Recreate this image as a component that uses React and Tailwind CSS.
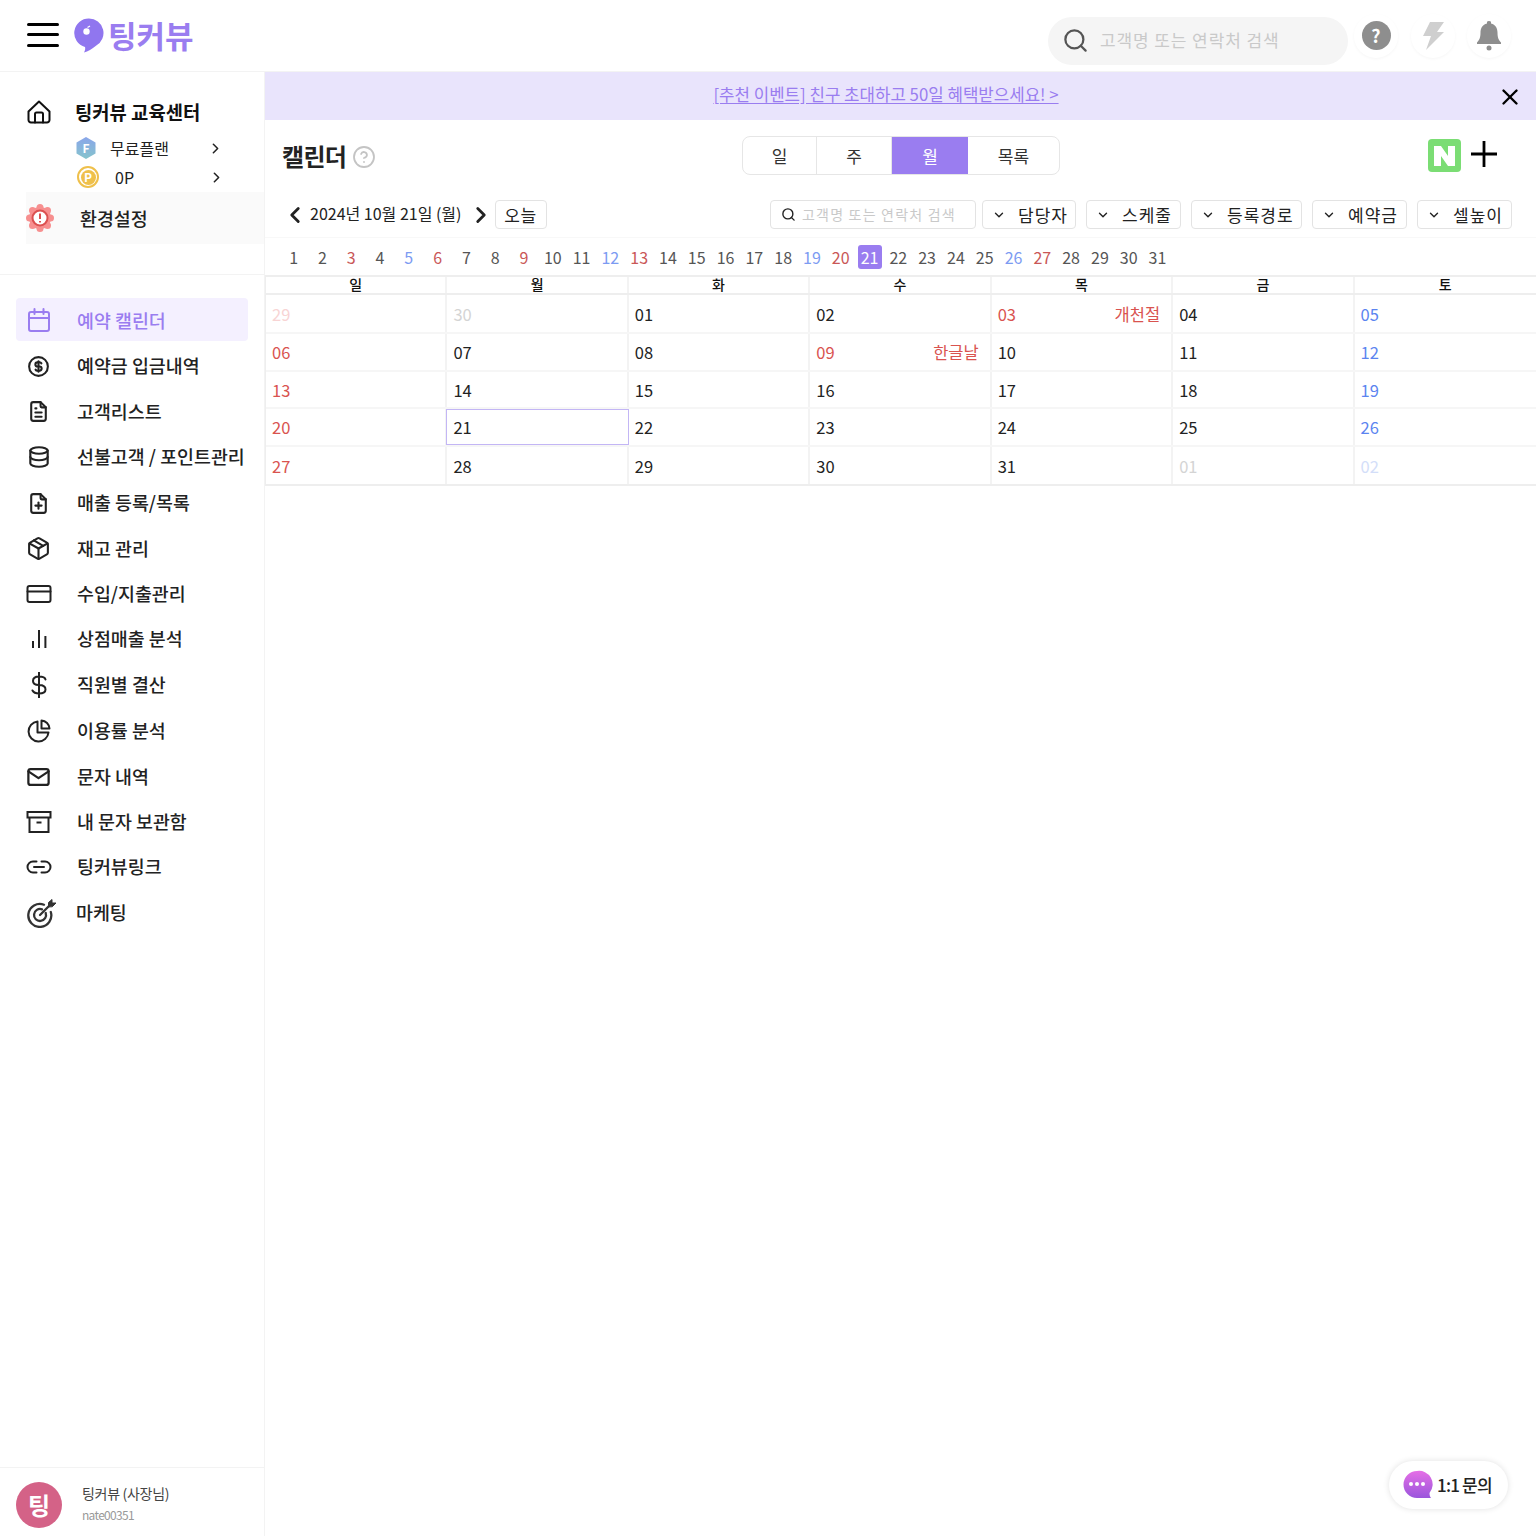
import { TbCoin, TbFileText, TbDatabase, TbFilePlus, TbMail } from "react-icons/tb";
import { ChevronLeft, ChevronRight, ChevronDown, Search, X, CircleHelp, Package } from "lucide-react";

const FONT = "font-['Noto_Sans_CJK_KR','Noto_Sans',sans-serif]";

function Line({ size = 26, children }) {
  return (
    <svg width={size} height={size} viewBox="0 0 26 26" fill="none" stroke="currentColor" strokeWidth="2" strokeLinecap="round" strokeLinejoin="round">
      {children}
    </svg>
  );
}

const HomeIcon = () => (
  <Line>
    <path d="M2.500 12.500 13 2.500l10.500 10v8.500a2.500 2.500 0 0 1-2.500 2.500H5A2.500 2.500 0 0 1 2.500 21z" />
    <path d="M9 23.500v-8.500a1.500 1.500 0 0 1 1.500-1.500h5A1.500 1.500 0 0 1 17 15v8.500" />
  </Line>
);
const CalendarIcon = () => (
  <Line>
    <rect x="3" y="5" width="20" height="19" rx="2" />
    <path d="M3 11h20M8.500 2v5M17.500 2v5" />
  </Line>
);
const CardIcon = () => (
  <Line>
    <rect x="1.500" y="5" width="23" height="16" rx="2" />
    <path d="M1.500 10.500h23" />
  </Line>
);
const BarsIcon = () => (
  <Line>
    <path d="M7 15v7M13 4v18M19.400 10v12" strokeLinecap="butt" />
  </Line>
);
const DollarIcon = () => (
  <Line>
    <path d="M19.500 7.500C19 5.500 16.500 4.500 13 4.500 9.500 4.500 7 6 7 9c0 3 3 4 6 4s6.500 1 6.500 4.500c0 3-2.500 4-6.500 4-3.500 0-5.500-1-6.500-3M13 .5v25" />
  </Line>
);
const PieIcon = () => (
  <Line>
    <path d="M11.500 3.500a10 10 0 1 0 11 11H11.500z" />
    <path d="M15.500 2.500a8.500 8.500 0 0 1 8 8h-8z" />
  </Line>
);
const ArchiveIcon = () => (
  <Line>
    <path d="M1.500 3h23v5.500h-23zM3.500 8.500V23h19V8.500M10.500 13.500h5" strokeLinecap="butt" strokeLinejoin="miter" />
  </Line>
);
const LinkIcon = () => (
  <Line>
    <path d="M10.500 7.500H7a5.500 5.500 0 0 0 0 11h3.500M15.500 7.500H19a5.500 5.500 0 0 1 0 11h-3.500M8 13h10" />
  </Line>
);
const TargetIcon = () => (
  <svg width="30" height="30" viewBox="0 0 30 30" fill="none" stroke="#333" strokeWidth="2.300" strokeLinecap="round" className="ml-[6px] shrink-0">
    <path d="M17 6.700A11.500 11.500 0 1 0 23.800 14" />
    <path d="M15 11.300A6 6 0 1 0 18.700 15" />
    <path d="M13 17 24 6" />
    <path d="M21.500 8.500V4.500L25 1.500V5h4l-3.500 3.500z" fill="#333" strokeWidth="1" strokeLinejoin="round" />
  </svg>
);

const menu = [
  { label: "예약금 입금내역", icon: <TbCoin size={25} />, h: "h-[46px]" },
  { label: "고객리스트", icon: <TbFileText size={25} />, h: "h-[45px]" },
  { label: "선불고객 / 포인트관리", icon: <TbDatabase size={26} />, h: "h-[46px]" },
  { label: "매출 등록/목록", icon: <TbFilePlus size={25} />, h: "h-[46px]" },
  { label: "재고 관리", icon: <Package size={25} strokeWidth={2} />, h: "h-[45px]" },
  { label: "수입/지출관리", icon: <CardIcon />, h: "h-[45px]" },
  { label: "상점매출 분석", icon: <BarsIcon />, h: "h-[46px]" },
  { label: "직원별 결산", icon: <DollarIcon />, h: "h-[46px]" },
  { label: "이용률 분석", icon: <PieIcon />, h: "h-[46px]" },
  { label: "문자 내역", icon: <TbMail size={28} />, h: "h-[45px]" },
  { label: "내 문자 보관함", icon: <ArchiveIcon />, h: "h-[45px]" },
  { label: "팅커뷰링크", icon: <LinkIcon />, h: "h-[46px]" },
  { label: "마케팅", icon: <TargetIcon />, h: "h-[46px]", tight: true },
];

const RED = [3, 6, 9, 13, 20, 27];
const BLUE = [5, 12, 19, 26];

const weeks = [
  [
    { d: "29", c: "text-[#f8d4d4]" },
    { d: "30", c: "text-[#d4d4d4]" },
    { d: "01" },
    { d: "02" },
    { d: "03", c: "text-[#d9534f]", note: "개천절" },
    { d: "04" },
    { d: "05", c: "text-[#5b84f0]" },
  ],
  [
    { d: "06", c: "text-[#d9534f]" },
    { d: "07" },
    { d: "08" },
    { d: "09", c: "text-[#d9534f]", note: "한글날" },
    { d: "10" },
    { d: "11" },
    { d: "12", c: "text-[#5b84f0]" },
  ],
  [
    { d: "13", c: "text-[#d9534f]" },
    { d: "14" },
    { d: "15" },
    { d: "16" },
    { d: "17" },
    { d: "18" },
    { d: "19", c: "text-[#5b84f0]" },
  ],
  [
    { d: "20", c: "text-[#d9534f]" },
    { d: "21", today: true },
    { d: "22" },
    { d: "23" },
    { d: "24" },
    { d: "25" },
    { d: "26", c: "text-[#5b84f0]" },
  ],
  [
    { d: "27", c: "text-[#d9534f]" },
    { d: "28" },
    { d: "29" },
    { d: "30" },
    { d: "31" },
    { d: "01", c: "text-[#d4d4d4]" },
    { d: "02", c: "text-[#d3def9]" },
  ],
];

const rowHeights = ["h-[37px]", "h-[38px]", "h-[37px]", "h-[38px]", "h-[39px]"];
const rowPad = ["pt-[2px]", "", "pt-[2px]", "", "pt-[2px]"];

function FilterButton({ label, width }) {
  return (
    <button className={`${width} flex h-[29px] items-center gap-[12px] rounded border border-[#e3e3e3] bg-white pl-[9px] text-[17px] tracking-[1px] text-[#222]`}>
      <ChevronDown size={14} strokeWidth={2.4} />
      {label}
    </button>
  );
}

function Sidebar() {
  return (
    <aside className="flex w-[265px] shrink-0 flex-col justify-between border-r border-[#f3f3f3]">
      <div>
        <div className="border-b border-[#f3f3f3] pb-[30px] pt-[25px]">
          <div className="flex h-[30px] items-center pl-[26px]">
            <span className="text-[#111]">
              <HomeIcon />
            </span>
            <span className="ml-[23px] text-[18.800px] font-bold text-[#111]">팅커뷰 교육센터</span>
          </div>
          <div className="mt-[8px] flex h-[26px] items-center pl-[75px] text-[16px] text-[#222]">
            <svg width="22" height="24" viewBox="0 0 22 24">
              <defs>
                <linearGradient id="plan" x1="0" y1="0" x2="0" y2="1">
                  <stop offset="0" stopColor="#8aa6ea" />
                  <stop offset="1" stopColor="#85c4cc" />
                </linearGradient>
              </defs>
              <path d="M11 1l9.500 5.500v11L11 23l-9.500-5.500v-11z" fill="url(#plan)" />
              <text x="11" y="16.500" textAnchor="middle" fontSize="12" fontWeight="700" fill="#fff">F</text>
            </svg>
            <span className="ml-[13px] w-[97px]">무료플랜</span>
            <ChevronRight size={17} strokeWidth={2.2} />
          </div>
          <div className="mt-[3px] flex h-[26px] items-center pl-[77px] text-[16px] text-[#222]">
            <span className="flex h-[22px] w-[22px] items-center justify-center rounded-full border-2 border-[#efc04b] font-bold text-white">
              <span className="flex h-[15px] w-[15px] items-center justify-center rounded-full bg-[#efc04b] text-[12px]">P</span>
            </span>
            <span className="ml-[16px] w-[93px]">0P</span>
            <ChevronRight size={17} strokeWidth={2.2} />
          </div>
          <div className="ml-[26px] mt-[2px] flex h-[52px] items-center bg-[#fafafa]">
            <svg width="28" height="28" viewBox="0 0 28 28" className="shrink-0">
              <circle cx="14" cy="14" r="11" fill="#f78f8f" />
              <g fill="#f78f8f">
                <circle cx="14" cy="3.500" r="3.500" />
                <circle cx="14" cy="24.500" r="3.500" />
                <circle cx="3.500" cy="14" r="3.500" />
                <circle cx="24.500" cy="14" r="3.500" />
                <circle cx="6.500" cy="6.500" r="3.500" />
                <circle cx="21.500" cy="6.500" r="3.500" />
                <circle cx="6.500" cy="21.500" r="3.500" />
                <circle cx="21.500" cy="21.500" r="3.500" />
              </g>
              <circle cx="14" cy="14" r="7.500" fill="#fff" stroke="#dc5050" strokeWidth="2" />
              <path d="M14 9.500v5.500M14 17v1.600" stroke="#dc5050" strokeWidth="2" />
            </svg>
            <span className="ml-[26px] pt-[2px] text-[18.400px] font-medium text-[#222]">환경설정</span>
          </div>
        </div>

        <nav className="pt-[23px]">
          <div className="mx-4 flex h-[43px] items-center rounded bg-[#f4f0ff] pl-[10px] text-[#9a7df0]">
            <span className="flex w-[26px] justify-center">
              <CalendarIcon />
            </span>
            <span className="ml-[25px] pt-[3px] text-[18.400px] font-medium">예약 캘린더</span>
          </div>
          <div className="pt-[2px]">
            {menu.map((item) => (
              <div key={item.label} className={`${item.h} flex items-center pl-[25px] text-[#222]`}>
                <span className="flex w-[27px] justify-center">{item.icon}</span>
                <span className={`${item.tight ? "ml-[24px]" : "ml-[25px]"} whitespace-nowrap text-[18.400px] font-medium`}>
                  {item.label}
                </span>
              </div>
            ))}
          </div>
        </nav>
      </div>

      <div className="flex h-[69px] items-center border-t border-[#f3f3f3] pl-4 pt-[6px]">
        <span className="flex h-[46px] w-[46px] items-center justify-center rounded-full bg-[#d46287] text-[24px] font-bold text-white">
          팅
        </span>
        <div className="mb-[4px] ml-[20px]">
          <div className="text-[14px] leading-[20px] tracking-[-0.3px] text-[#444]">팅커뷰 (사장님)</div>
          <div className="mt-[3px] text-[12px] leading-[18px] tracking-[-0.7px] text-[#999]">nate00351</div>
        </div>
      </div>
    </aside>
  );
}

function Calendar() {
  return (
    <div className="border-b-2 border-l border-t-2 border-[#eeeeee]">
      <div className="grid h-[18px] grid-cols-7 border-b-2 border-[#eeeeee]">
        {["일", "월", "화", "수", "목", "금", "토"].map((d, i) => (
          <div
            key={d}
            className={`text-center text-[14px] font-medium leading-[15px] text-[#111] ${i < 6 ? "border-r-2 border-[#f3f3f3]" : ""}`}
          >
            {d}
          </div>
        ))}
      </div>
      {weeks.map((week, r) => (
        <div key={r} className={`grid grid-cols-7 ${rowHeights[r]} ${r > 0 ? "border-t-2 border-[#f6f6f6]" : ""}`}>
          {week.map((cell, i) => (
            <div
              key={i}
              className={`flex items-center justify-between pr-[11px] text-[16.500px] ${rowPad[r]} ${cell.c || "text-[#222]"} ${
                cell.today
                  ? "-ml-px border border-[#c3b6f5] pl-[6px]"
                  : i < 6
                  ? "border-r-2 border-[#f3f3f3] pl-[6px]"
                  : "pl-[6px]"
              }`}
            >
              <span>{cell.d}</span>
              {cell.note && <span className="text-[#d9534f]">{cell.note}</span>}
            </div>
          ))}
        </div>
      ))}
    </div>
  );
}

export default function App() {
  const days = Array.from({ length: 31 }, (_, i) => i + 1);

  return (
    <div className={`${FONT} relative flex h-screen flex-col overflow-hidden bg-white`}>
      {/* top bar */}
      <header className="flex h-[72px] shrink-0 items-center border-b border-[#f3f3f3] pl-[27px] pr-[25px]">
        <div className="flex w-[32px] flex-col gap-[7.500px] pb-[2px]">
          <span className="h-[3px] rounded bg-black" />
          <span className="h-[3px] rounded bg-black" />
          <span className="h-[3px] rounded bg-black" />
        </div>
        <svg width="30" height="36" viewBox="0 0 30 36" className="ml-[15px]">
          <path
            d="M15 .5a14.500 14.500 0 0 1 7 27.200C18 31 14 33.500 10 34.500c1-1.500 1.500-3.500 1-5.500A14.500 14.500 0 0 1 15 .5z"
            fill="#9076ef"
          />
          <circle cx="12.500" cy="13.500" r="3.200" fill="#fff" />
          <path d="M13.500 9.500l2.500-1.500" stroke="#fff" strokeWidth="1.200" />
        </svg>
        <span className="mb-[2px] ml-[4px] text-[31px] font-bold leading-none text-[#9a7df0]">팅커뷰</span>

        <div className="ml-auto mt-[10px] flex h-[48px] w-[300px] items-center rounded-full bg-[#f5f5f5] pl-[14px]">
          <Search size={27} strokeWidth={2} className="text-[#555]" />
          <span className="mb-[2px] ml-[11px] text-[17px] tracking-[0.9px] text-[#c9c9c9]">고객명 또는 연락처 검색</span>
        </div>
        <div className="ml-[6px] flex h-[44px] w-[44px] items-center justify-center rounded-full shadow-[0_1px_3px_rgba(0,0,0,0.04)]">
          <span className="flex h-[29px] w-[29px] items-center justify-center rounded-full bg-[#8e8e8e] text-[18px] font-bold text-white">
            ?
          </span>
        </div>
        <div className="ml-[13px] flex h-[44px] w-[44px] items-center justify-center rounded-full shadow-[0_1px_3px_rgba(0,0,0,0.04)]">
          <svg width="24" height="30" viewBox="0 0 24 30">
            <path d="M9 1h14l-7 10h7L5 29l5-14H2z" fill="#cfcfcf" />
          </svg>
        </div>
        <div className="ml-[12px] flex h-[44px] w-[44px] items-center justify-center rounded-full shadow-[0_1px_3px_rgba(0,0,0,0.04)]">
          <svg width="26" height="32" viewBox="0 0 26 32">
            <path
              d="M13 1a2 2 0 0 1 2 2.400c4.500 1 6.500 4.600 6.500 9.100 0 5 1 7.500 3.500 10v1.500H1V22.500c2.500-2.500 3.500-5 3.500-10 0-4.500 2-8.100 6.500-9.100A2 2 0 0 1 13 1z"
              fill="#8e8e8e"
            />
            <circle cx="13" cy="28" r="2.500" fill="#8e8e8e" />
          </svg>
        </div>
      </header>

      <div className="flex min-h-0 flex-1">
        <Sidebar />

        <main className="min-w-0 flex-1">
          {/* event banner */}
          <div className="relative flex h-[48px] items-center justify-center bg-[#e9e4fc] pb-[3px] pr-[29px]">
            <a className="text-[16.800px] text-[#9a7df0] underline underline-offset-2">
              [추천 이벤트] 친구 초대하고 50일 혜택받으세요! &gt;
            </a>
            <X size={26} strokeWidth={2.2} className="absolute right-[13px] top-[12px] text-black" />
          </div>

          {/* title row */}
          <div className="flex h-[71px] items-center pl-[17px] pr-[39px]">
            <div className="flex w-[460px] items-center">
              <h1 className="text-[24px] font-bold tracking-[-0.7px] text-[#222]">캘린더</h1>
              <CircleHelp size={24} strokeWidth={1.8} className="ml-[6px] mt-[2px] text-[#c4c4c4]" />
            </div>
            <div className="flex h-[39px] w-[318px] overflow-hidden rounded-lg border border-[#e6e6e6] text-[17px] text-[#333]">
              <span className="flex w-[74px] items-center justify-center border-r border-[#e6e6e6]">일</span>
              <span className="flex w-[75px] items-center justify-center border-r border-[#e6e6e6]">주</span>
              <span className="flex w-[76px] items-center justify-center bg-[#9a7df0] text-white">월</span>
              <span className="flex flex-1 items-center justify-center">목록</span>
            </div>
            <div className="ml-auto flex items-center gap-[10px]">
              <span className="flex h-[33px] w-[33px] items-center justify-center rounded bg-[#7bdd74]">
                <svg width="25" height="24" viewBox="0 0 25 24">
                  <path d="M2 2h7l7 10V2h7v20h-7L9 12v10H2z" fill="#fff" />
                </svg>
              </span>
              <svg width="26" height="26" viewBox="0 0 26 26" className="mb-[4px]">
                <path d="M13 0v26M0 13h26" stroke="#000" strokeWidth="2.800" />
              </svg>
            </div>
          </div>

          {/* date and filters */}
          <div className="flex h-[47px] items-start border-b border-[#f8f8f8] pl-[17px] pr-[24px] pt-[9px]">
            <ChevronLeft size={26} strokeWidth={2.6} className="mt-[2px] text-[#222]" />
            <span className="ml-[2px] mt-[1px] text-[16px] text-[#222]">2024년 10월 21일 (월)</span>
            <ChevronRight size={26} strokeWidth={2.6} className="ml-[6px] mt-[2px] text-[#222]" />
            <button className="ml-px flex h-[29px] w-[52px] items-center justify-center rounded border border-[#e3e3e3] text-[17px] tracking-[0.5px] text-[#222]">
              오늘
            </button>
            <div className="ml-auto flex gap-[10px]">
              <div className="mr-[-4px] flex h-[29px] w-[206px] items-center rounded border border-[#e3e3e3] pl-[10px]">
                <Search size={15} strokeWidth={2.2} className="text-[#222]" />
                <span className="ml-[6px] text-[14px] tracking-[1.2px] text-[#c9c9c9]">고객명 또는 연락처 검색</span>
              </div>
              <FilterButton label="담당자" width="w-[94px]" />
              <FilterButton label="스케줄" width="w-[95px]" />
              <FilterButton label="등록경로" width="w-[111px]" />
              <FilterButton label="예약금" width="w-[95px]" />
              <FilterButton label="셀높이" width="w-[95px]" />
            </div>
          </div>

          {/* month day strip */}
          <div className="flex h-[37px] items-center pl-[14.200px]">
            {days.map((d) => {
              const color = RED.includes(d) ? "text-[#c95757]" : BLUE.includes(d) ? "text-[#7c9bf2]" : "text-[#555]";
              return (
                <span key={d} className="flex w-[28.800px] justify-center text-[16px]">
                  {d === 21 ? (
                    <span className="flex h-[24px] w-[24px] items-center justify-center rounded-[3px] bg-[#9a7df0] text-white">
                      {d}
                    </span>
                  ) : (
                    <span className={color}>{d}</span>
                  )}
                </span>
              );
            })}
          </div>

          <Calendar />
        </main>
      </div>

      {/* floating inquiry button */}
      <div className="absolute bottom-[27px] right-[28px] flex h-[48px] w-[119px] items-center rounded-full bg-white pl-[14px] shadow-[0_0_6px_rgba(0,0,0,0.12)]">
        <svg width="30" height="30" viewBox="0 0 30 30">
          <defs>
            <linearGradient id="bubble" x1="0" y1="0" x2="0" y2="1">
              <stop offset="0" stopColor="#e56fe6" />
              <stop offset="1" stopColor="#9a55dc" />
            </linearGradient>
          </defs>
          <path d="M14 1a13.500 13.500 0 1 0 0 27h14c-1-1-1.500-3-1.500-5A13.500 13.500 0 0 0 14 1z" fill="url(#bubble)" />
          <circle cx="8" cy="14" r="2" fill="#fff" />
          <circle cx="14" cy="14" r="2" fill="#fff" />
          <circle cx="20" cy="14" r="2" fill="#fff" />
        </svg>
        <span className="ml-[4px] text-[17px] font-medium tracking-[-0.8px] text-[#222]">1:1 문의</span>
      </div>
    </div>
  );
}
